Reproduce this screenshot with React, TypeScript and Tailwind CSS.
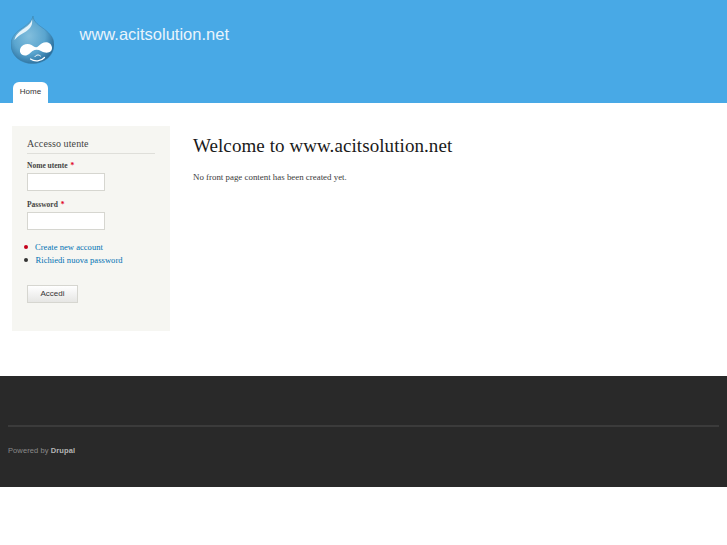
const serif = "font-['Liberation_Serif',serif]";

function DrupalLogo() {
  return (
    <svg className="w-[43px] h-[48px]" viewBox="0 0 43 48" fill="none" xmlns="http://www.w3.org/2000/svg">
      <defs>
        <radialGradient id="drop" cx="0.42" cy="0.42" r="0.62">
          <stop stopColor="#82bedd" />
          <stop offset="0.6" stopColor="#5aa5cf" />
          <stop offset="1" stopColor="#2a6f9e" />
        </radialGradient>
      </defs>
      <path d="M22 0C22.500 5 26 8 31 11.500C37.500 16 43 21 43 28.500C43 39.500 33.500 47.500 21.500 47.500C9.500 47.500 0 39.500 0 28.500C0 20.500 6 15.500 11.500 12C16.500 8.500 21 5 22 0Z" fill="url(#drop)" stroke="#3a7fa9" strokeWidth="0.5" />
      <path d="M21 3.500C20 8 16 10.500 11.500 13.500C7.500 16.500 4 19.500 3.500 24C7 19.500 11 18 15 15.500C19.500 12.500 22 8.500 21 3.500Z" fill="#e4f3fa" />
      <path d="M14 39.500C9.500 39.500 8 35.500 9.500 32C11.500 28 17 27 20.500 29C23 30.500 25 32.500 27.500 30C30.500 27.500 33 25.500 37 26.500C41 28 42 32.500 40 35C37.500 37.500 33.500 37 30 35C27.500 33.500 24.500 33 21.500 35C19 37 17.500 39.500 14 39.500Z" fill="#ffffff" />
      <path d="M19.500 43C23.500 46 30 45.500 33.500 41.500" stroke="#ffffff" strokeWidth="1.200" strokeLinecap="round" />
      <path d="M24 40.500C25.500 38.500 28 38.500 29.500 40" stroke="#ffffff" strokeWidth="1" strokeLinecap="round" />
    </svg>
  );
}

function Field({ label, type }: { label: string; type: string }) {
  return (
    <div>
      <label className="block text-[7.500px] leading-[10px] font-bold text-[#444444]">
        {label} <span className="text-[#e0001a] ml-[1px]">*</span>
      </label>
      <input
        type={type}
        className="block mt-[2px] w-[78px] h-[18px] bg-white border border-[#d6d6d0] outline-none"
      />
    </div>
  );
}

export default function App() {
  return (
    <div className="min-h-[545px] bg-white font-['Liberation_Sans',sans-serif]">
      <header className="h-[103px] bg-[#48a9e6] flex flex-col">
        <div className="flex items-start h-[82px] pl-[11px] pt-[16px]">
          <DrupalLogo />
          <h1 className="ml-[25.500px] mt-[8px] text-[16.500px] leading-[21px] text-[#e8f4fc]">www.acitsolution.net</h1>
        </div>
        <nav className="pl-[13px]">
          <a className="block w-[35px] h-[21px] bg-white rounded-t-[6px] text-center text-[8px] leading-[20px] text-[#333333]">
            Home
          </a>
        </nav>
      </header>

      <div className={`flex items-start h-[273px] pl-[12px] pt-[23px] ${serif}`}>
        <aside className="w-[158px] h-[205px] bg-[#f6f6f2] px-[15px] pt-[11px] shrink-0">
          <h2 className="text-[10px] leading-[13px] tracking-[0.1px] text-[#444444] pb-[3px] border-b border-[#dfdfda]">
            Accesso utente
          </h2>
          <div className="mt-[7px] flex flex-col gap-[9px]">
            <Field label="Nome utente" type="text" />
            <Field label="Password" type="password" />
          </div>
          <ul className="mt-[12px] flex flex-col gap-[3px] text-[8.500px] leading-[10px] tracking-[0.05px] text-[#0071b3]">
            <li className="flex items-center">
              <span className="w-[4px] h-[4px] rounded-full bg-[#c4001a] ml-[-3px] mr-[7px]" />
              Create new account
            </li>
            <li className="flex items-center">
              <span className="w-[4px] h-[4px] rounded-full bg-[#333333] ml-[-3px] mr-[7.500px]" />
              Richiedi nuova password
            </li>
          </ul>
          <button className="block mt-[20px] w-[51px] h-[18px] bg-gradient-to-b from-white to-[#e6e6e4] border border-[#d6d6d0] text-[8px] text-[#333333] font-['Liberation_Sans',sans-serif]">
            Accedi
          </button>
        </aside>
        <main className="ml-[23px] pt-[8px]">
          <h1 className="text-[19px] leading-[24px] tracking-[0.08px] text-[#1a1a1a]">Welcome to www.acitsolution.net</h1>
          <p className="mt-[13px] text-[8.900px] leading-[12px] text-[#3b3b3b]">No front page content has been created yet.</p>
        </main>
      </div>

      <footer className="h-[111px] bg-[#292929] px-[8px] pt-[49px]">
        <div className="border-t-2 border-[#3b3b3b] pt-[19px] text-[7.500px] leading-[10px] tracking-[0.1px] text-[#8a8a8a]">
          Powered by <span className="text-[#b5b5b5] font-semibold">Drupal</span>
        </div>
      </footer>
    </div>
  );
}
